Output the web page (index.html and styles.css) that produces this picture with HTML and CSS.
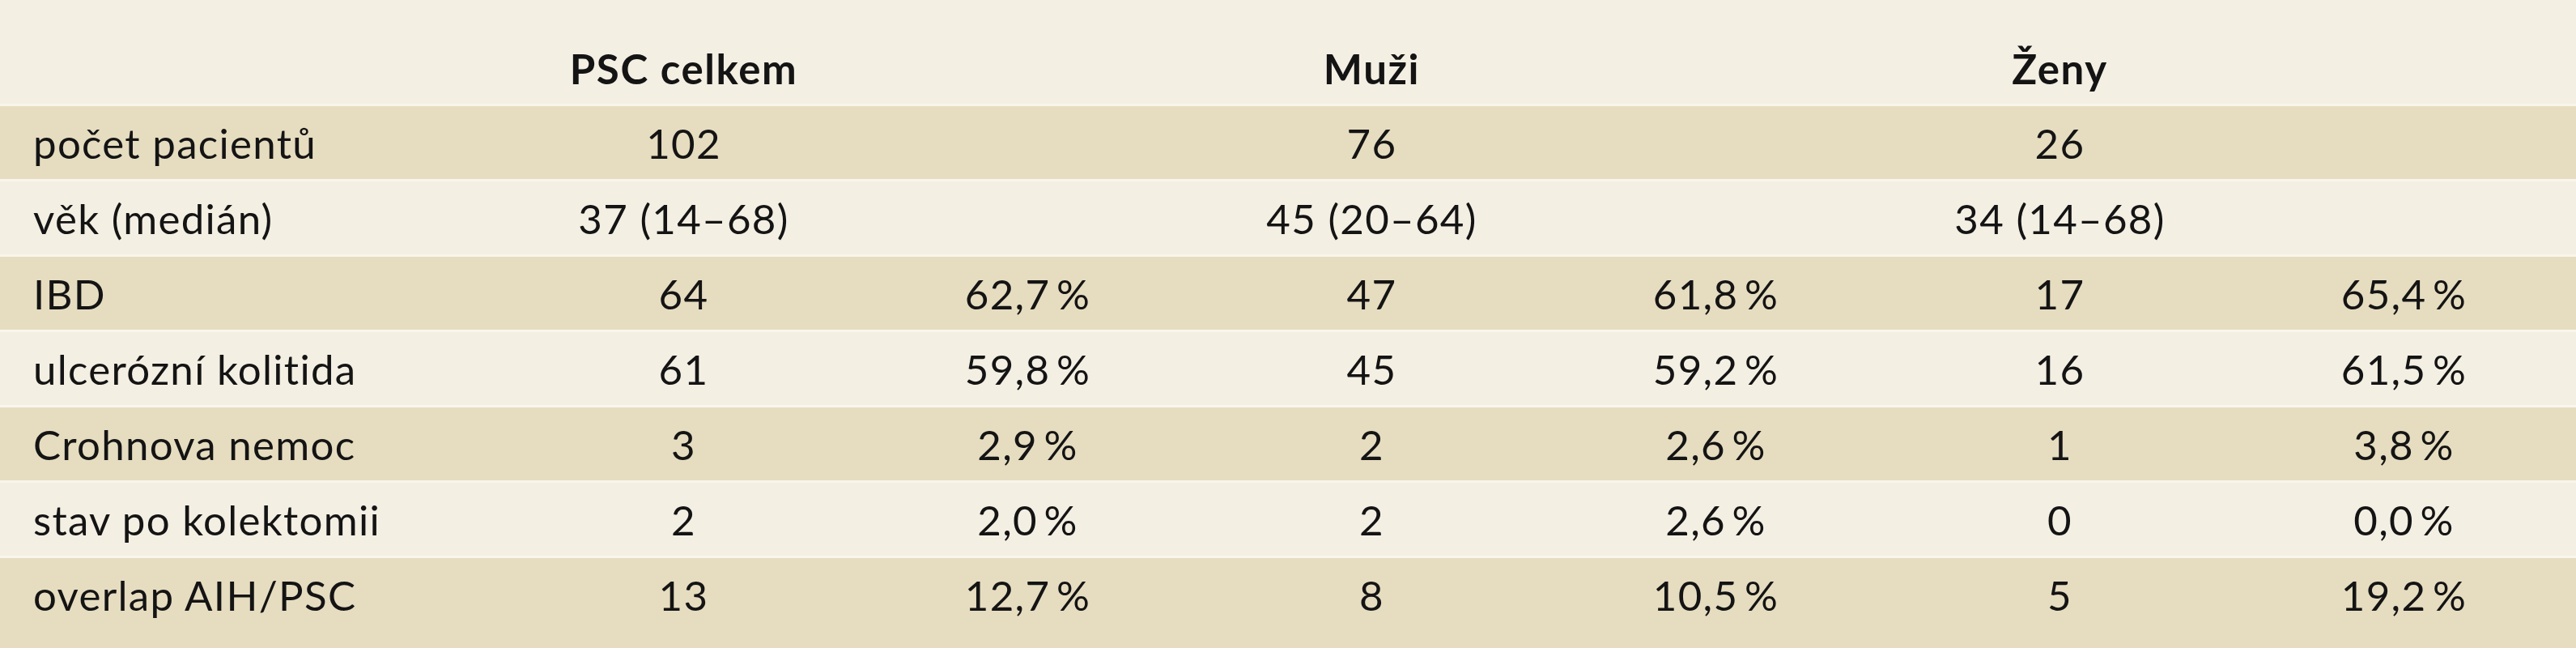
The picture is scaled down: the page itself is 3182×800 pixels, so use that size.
FILE: index.html
```html
<!DOCTYPE html>
<html lang="cs">
<head>
<meta charset="utf-8">
<title>PSC</title>
<link rel="stylesheet" href="styles.css">
</head>
<body>
<div class="table">
  <div class="row head">
    <div class="cell label"></div>
    <div class="cell">PSC celkem</div>
    <div class="cell"></div>
    <div class="cell">Muži</div>
    <div class="cell"></div>
    <div class="cell">Ženy</div>
    <div class="cell"></div>
  </div>
  <div class="row dark">
    <div class="cell label">počet pacientů</div>
    <div class="cell">102</div>
    <div class="cell"></div>
    <div class="cell">76</div>
    <div class="cell"></div>
    <div class="cell">26</div>
    <div class="cell"></div>
  </div>
  <div class="row light">
    <div class="cell label">věk (medián)</div>
    <div class="cell">37 (14–68)</div>
    <div class="cell"></div>
    <div class="cell">45 (20–64)</div>
    <div class="cell"></div>
    <div class="cell">34 (14–68)</div>
    <div class="cell"></div>
  </div>
  <div class="row dark">
    <div class="cell label">IBD</div>
    <div class="cell">64</div>
    <div class="cell">62,7&thinsp;%</div>
    <div class="cell">47</div>
    <div class="cell">61,8&thinsp;%</div>
    <div class="cell">17</div>
    <div class="cell">65,4&thinsp;%</div>
  </div>
  <div class="row light">
    <div class="cell label">ulcerózní kolitida</div>
    <div class="cell">61</div>
    <div class="cell">59,8&thinsp;%</div>
    <div class="cell">45</div>
    <div class="cell">59,2&thinsp;%</div>
    <div class="cell">16</div>
    <div class="cell">61,5&thinsp;%</div>
  </div>
  <div class="row dark">
    <div class="cell label">Crohnova nemoc</div>
    <div class="cell">3</div>
    <div class="cell">2,9&thinsp;%</div>
    <div class="cell">2</div>
    <div class="cell">2,6&thinsp;%</div>
    <div class="cell">1</div>
    <div class="cell">3,8&thinsp;%</div>
  </div>
  <div class="row light">
    <div class="cell label">stav po kolektomii</div>
    <div class="cell">2</div>
    <div class="cell">2,0&thinsp;%</div>
    <div class="cell">2</div>
    <div class="cell">2,6&thinsp;%</div>
    <div class="cell">0</div>
    <div class="cell">0,0&thinsp;%</div>
  </div>
  <div class="row dark last">
    <div class="cell label">overlap AIH/PSC</div>
    <div class="cell">13</div>
    <div class="cell">12,7&thinsp;%</div>
    <div class="cell">8</div>
    <div class="cell">10,5&thinsp;%</div>
    <div class="cell">5</div>
    <div class="cell">19,2&thinsp;%</div>
  </div>
</div>
</body>
</html>
```

FILE: styles.css
```css
html, body {
  margin: 0;
  padding: 0;
  background: #f4efe3;
}

.table {
  width: 3182px;
  font-family: Lato, "Open Sans", "Liberation Sans", sans-serif;
  font-size: 51px;
  line-height: 60px;
  letter-spacing: 1.3px;
  color: #141414;
}

.row {
  display: grid;
  grid-template-columns: 632px repeat(6, 425px);
  box-sizing: border-box;
  height: 93px;
  padding-top: 16px;
  border-top: 3px solid #f8f5ec;
}

.row.head {
  height: 128px;
  padding-top: 55px;
  border-top: 0;
  background: #f4efe3;
  font-weight: 700;
  letter-spacing: 1.6px;
}

.row.dark {
  background: #e6dcc0;
}

.row.light {
  background: #f4efe3;
}

.row.last {
  height: 114px;
}

.cell {
  text-align: center;
  white-space: nowrap;
}

.cell.label {
  text-align: left;
  padding-left: 41px;
}
```
